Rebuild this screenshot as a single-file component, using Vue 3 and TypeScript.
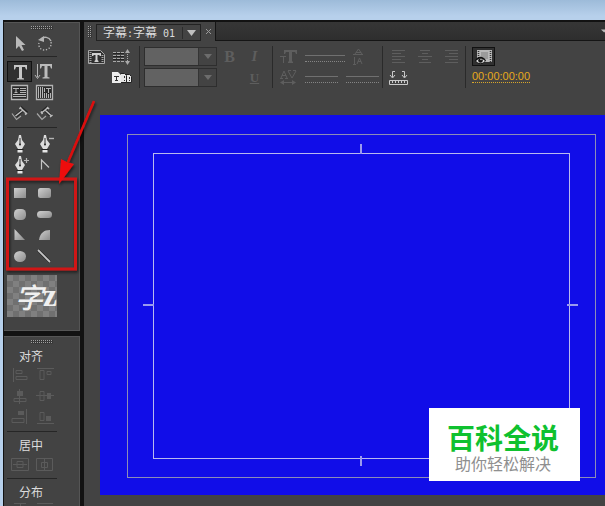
<script setup lang="ts">
import { ref } from 'vue'

interface Tool {
  name: string
  icon: string
}

const L = 'fill="none" stroke="#b4b4b4"'
const pen = '<path d="M11 2h2l1 5 3 4-3 5h-4l-3-5 3-4z" fill="#dcdcdc"/><path d="M12 5v6" stroke="#333"/><circle cx="12" cy="11.500" r="1" fill="#222"/><path d="M9.500 17h5v2.500h-5z" fill="#e6e6e6"/><path d="M8.500 16.500h7" stroke="#222"/>'

const groups: Tool[][] = [
  [
    { name: '选择工具', icon: '<path d="M8 3v13l3-3 3 5 2-1-2.500-5h4z" fill="#b9b9b9"/>' },
    { name: '旋转工具', icon: `<path d="M8 6c3-3 8-2 10 2" ${L} stroke-width="1.400"/><path d="M5 7l6-4v6z" fill="#b4b4b4"/><path d="M18 9c1 5-3 8-7 8-3 0-6-3-5-7" ${L} stroke-width="1.400" stroke-dasharray="1.300 1.700"/>` },
  ],
  [
    { name: '文字工具', icon: '<path d="M6 3h13v4.500h-1L17 5h-3v11l2 .5v1H9v-1l2-.5V5H8L7 7.500H6z" fill="#c6c6c6"/>' },
    { name: '垂直文字工具', icon: '<path d="M4.500 2v13M2 13l2.500 3.500L7 13" fill="none" stroke="#b4b4b4"/><path d="M7 2h12v4.500h-1L17 4h-2.500v11l2 .5v1h-7v-1l2-.5V4H9L8 6.500H7z" fill="#bbb"/>' },
    { name: '区域文字工具', icon: `<path d="M3.500 2.500h16v14h-16z" fill="#292929" stroke="#b4b4b4" stroke-width="1.300"/><path d="M12 5.500h6M12 7.500h6M12 9.500h6M5 11.500h13M5 13.500h13" ${L}/><path d="M5 5.500h6M8 5v5M6.500 9.500h3" ${L}/>` },
    { name: '垂直区域文字工具', icon: `<path d="M3.500 2.500h16v14h-16z" fill="#292929" stroke="#b4b4b4" stroke-width="1.300"/><path d="M5.500 4v11M7.500 4v11M9.500 4v11M11.500 10v5M13.500 10v5M15.500 11v4M17.500 10v5" ${L}/><path d="M13 5.500h5M15.500 5v5M11.500 5v4" ${L}/>` },
    { name: '路径文字工具', icon: '<path d="M8 12l7-6M12 3l7 6" fill="none" stroke="#222" stroke-width="3"/><path d="M7.500 12L15 6M12 3.500l6.500 6M11.500 5l1.500-2M17 10.500l2-1.500" fill="none" stroke="#bcbcbc" stroke-width="1.600"/><path d="M4 9.500l4.500 6 4.500-3.500" fill="none" stroke="#a5a5a5" stroke-width="1.200"/>' },
    { name: '垂直路径文字工具', icon: '<path d="M12 6l6 6M8.500 8.500L15 3" fill="none" stroke="#222" stroke-width="3"/><path d="M12 6l6.500 6M8.500 9L15 3.500M8 7.500L9.500 10M14 3l2 2M17 13l2.500-2" fill="none" stroke="#bcbcbc" stroke-width="1.600"/><path d="M4 9.500l5 6 4-3.500" fill="none" stroke="#a5a5a5" stroke-width="1.200"/>' },
  ],
  [
    { name: '钢笔工具', icon: pen },
    { name: '删除定位点工具', icon: `${pen}<path d="M16 5.500h5" ${L} stroke-width="1.400"/>` },
    { name: '添加定位点工具', icon: `${pen}<path d="M16 6.500h5M18.500 4v5" ${L} stroke-width="1.200"/>` },
    { name: '转换定位点工具', icon: '<path d="M8.500 15.500V6l7.500 7.500" fill="none" stroke="#c4c4c4" stroke-width="1.200"/>' },
  ],
  [
    { name: '矩形工具', icon: '<path d="M6 5h12v10H6z" fill="url(#metal)"/>' },
    { name: '圆角矩形工具', icon: '<rect x="5" y="5" width="13" height="10" rx="2.500" fill="url(#metal)"/>' },
    { name: '切角矩形工具', icon: '<rect x="6" y="5" width="12" height="11" rx="4.500" fill="url(#metal)"/>' },
    { name: '圆矩形工具', icon: '<rect x="4" y="7" width="15" height="7" rx="3.500" fill="url(#metal)"/>' },
    { name: '楔形工具', icon: '<path d="M6.500 4l10.500 11H6.500z" fill="url(#metal)"/>' },
    { name: '弧形工具', icon: '<path d="M6 15C7 8 11 5 17 5v10z" fill="url(#metal)"/>' },
    { name: '椭圆工具', icon: '<ellipse cx="12" cy="10.500" rx="6" ry="5.500" fill="url(#metal)"/>' },
    { name: '直线工具', icon: '<path d="M5 4l12 12" stroke="#222" stroke-width="3"/><path d="M5 4l12 12" stroke="#c4c4c4" stroke-width="1.800"/>' },
  ],
]

const D = 'fill="none" stroke="#5b5b5b"'
const alignTools: Tool[] = [
  { name: '水平靠左', icon: `<path d="M5.500 3v14M8 5.500h6v3H8zM8 11.500h11v3H8z" ${D}/>` },
  { name: '垂直靠上', icon: `<path d="M4 3.500h17M7 5.500h4v9H7zM14 6.500h4v3h-4z" ${D}/>` },
  { name: '水平居中', icon: `<path d="M11.500 3v15M6 12.500h12v3H6z" ${D}/><path d="M9 5h6v5H9z" fill="#5b5b5b"/>` },
  { name: '垂直居中', icon: `<path d="M3 9.500h18M7 5.500h4v9H7z" ${D}/><path d="M14 7h4v6h-4z" fill="#5b5b5b"/>` },
  { name: '水平靠右', icon: `<path d="M18.500 2v15M4 11.500h12v4H4z" ${D}/><path d="M10 4h6v4h-6z" fill="#5b5b5b"/>` },
  { name: '垂直靠下', icon: `<path d="M4 16.500h17M7 5.500h4v8H7z" ${D}/><path d="M13 9h5v5h-5z" fill="#5b5b5b"/>` },
]
const centerTools: Tool[] = [
  { name: '水平居中于画面', icon: `<path d="M3.500 4.500h17v12h-17zM5 10.500h14M9 7.500h6v6H9z" ${D}/>` },
  { name: '垂直居中于画面', icon: `<path d="M3.500 4.500h16v12h-16zM11.500 5v11M8.500 8.500h6v5h-6z" ${D}/>` },
]
const distributeTools: Tool[] = [
  { name: '水平靠左分布', icon: `<path d="M6 2.500h12M12.500 2v10" ${D}/>` },
  { name: '垂直靠上分布', icon: `<path d="M4 2.500h16" ${D}/>` },
]
const sections = [
  { title: '对齐', tools: alignTools },
  { title: '居中', tools: centerTools },
  { title: '分布', tools: distributeTools },
]

const activeTool = ref('文字工具')
</script>

<template>
  <div class="desktop">
    <div class="window">
      <aside class="side">
        <section class="panel tools">
          <div class="grip"></div>
          <div v-for="(group, i) in groups" :key="i" class="tool-grid">
            <button
              v-for="t in group"
              :key="t.name"
              type="button"
              class="tool"
              :class="{ active: t.name === activeTool }"
              :aria-label="t.name"
              @click="activeTool = t.name"
            >
              <svg viewBox="0 0 24 20" v-html="t.icon"></svg>
            </button>
          </div>
          <div class="swatch"><span class="zi">字</span><span class="z">z</span></div>
        </section>
        <section class="panel align">
          <div class="grip"></div>
          <div v-for="s in sections" :key="s.title" class="section">
            <h2>{{ s.title }}</h2>
            <div class="tool-grid">
              <button v-for="t in s.tools" :key="t.name" type="button" class="tool" disabled :aria-label="t.name">
                <svg viewBox="0 0 24 20" v-html="t.icon"></svg>
              </button>
            </div>
          </div>
        </section>
      </aside>

      <main class="titler">
        <header class="tabs">
          <div class="tab-area">
            <div class="grip-v"></div>
            <button type="button" class="tab">
              <span class="tab-name">字幕<span class="half">:</span>字幕<span class="half">&nbsp;01</span></span>
              <span class="tab-drop"><svg width="9" height="6" viewBox="0 0 9 6"><path d="M0 0h9L4.500 6z" fill="#c0c0c0" /></svg></span>
            </button>
            <button type="button" class="close" aria-label="关闭">
              <svg width="7" height="7" viewBox="0 0 7 7"><path d="M1 1l5 5M6 1L1 6" stroke="#9a9a9a" /></svg>
            </button>
          </div>
          <div class="tab-rest">
            <svg width="5" height="4" viewBox="0 0 5 4"><path d="M0 0h8L4 4z" fill="#bbb" /></svg>
          </div>
        </header>

        <div class="toolbar">
          <div class="group templates">
            <button type="button" class="ico" aria-label="新建字幕">
              <svg width="17" height="14" viewBox="0 0 17 14">
                <path d="M.5.500h12l4 4v9H.5z" fill="#303030" stroke="#a9a9a9" />
                <path d="M2.500 2v11M14.500 5v8" stroke="#a9a9a9" stroke-width="2" stroke-dasharray="1 1" />
                <path d="M4 3h9v3h-1l-1-1H9.500v5l1 1v1h-4v-1l1-1V5H6L5 6H4z" fill="#d0d0d0" />
              </svg>
            </button>
            <button type="button" class="ico" aria-label="滚动选项">
              <svg width="17" height="16" viewBox="0 0 17 16">
                <path d="M0 3.500h11M0 6.500h11M0 9.500h11M0 12.500h11" stroke="#a9a9a9" stroke-dasharray="3 1" />
                <path d="M0 4.500h11M0 7.500h11M0 10.500h11" stroke="#222" />
                <path d="M14.500 3v10" stroke="#a9a9a9" stroke-dasharray="1 1" />
                <path d="M12 4l2.500-4L17 4zM12 12l2.500 4 2.500-4z" fill="#a9a9a9" />
              </svg>
            </button>
            <span></span>
            <button type="button" class="ico" aria-label="模板">
              <svg width="20" height="13" viewBox="0 0 20 13">
                <path d="M13.500 3.500h4l2 2v6h-6z" fill="#e6e6e6" stroke="#222" />
                <path d="M8.500 2.500h4l2 2v7h-6z" fill="#e6e6e6" stroke="#222" />
                <path d="M0 1h6l3 3v8H0z" fill="#ededed" />
                <path d="M2 5.500h5M4.500 5v5M3 9.500h3M12.500 5v2M12 9.500h1M17.500 6v2M17 9.500h1" stroke="#333" fill="none" />
              </svg>
            </button>
          </div>

          <div class="group fonts">
            <label class="pick">
              <select disabled aria-label="字体"><option></option></select>
              <span><svg width="8" height="5" viewBox="0 0 8 5"><path d="M0 0h8L4 5z" fill="#6c6c6c" /></svg></span>
            </label>
            <label class="pick">
              <select disabled aria-label="字体样式"><option></option></select>
              <span><svg width="8" height="5" viewBox="0 0 8 5"><path d="M0 0h8L4 5z" fill="#6c6c6c" /></svg></span>
            </label>
          </div>

          <div class="group style">
            <button type="button" class="glyph bold" disabled>B</button>
            <button type="button" class="glyph italic" disabled>I</button>
            <span></span>
            <button type="button" class="glyph under" disabled>U</button>
          </div>

          <div class="group metrics">
            <div class="line">
              <svg width="17" height="15" viewBox="0 0 17 15">
                <path d="M4 1h13v4h-1l-1-2h-3v9l1 1v1H8v-1l1-1V3H6L5 5H4z" fill="#5e5e5e" />
                <path d="M0 7.500h6M3.500 8v6" stroke="#5e5e5e" />
              </svg>
              <i class="dash wide"></i>
              <svg width="10" height="17" viewBox="0 0 10 17">
                <path d="M2 6l3.500-5L9 6M3 4.500h5M0 6.500h10M1.500 9v7M4 16l2.500-6L9 16M5 13.500h3M0 16.500h3" fill="none" stroke="#5e5e5e" />
              </svg>
            </div>
            <div class="line">
              <svg width="17" height="15" viewBox="0 0 17 15">
                <path d="M1 8l3-7 3 7M2 5.500h4M8 1l4 7 4-7M0 8.500h3M5 8.500h3M8 .5h3M13 .5h3M3 12.500h11" fill="none" stroke="#5e5e5e" />
                <path d="M0 12.500L4 10v5zM16 12.500L12 10v5z" fill="#5e5e5e" />
              </svg>
              <i class="dash"></i>
              <i class="dash"></i>
            </div>
          </div>

          <div class="group paragraph">
            <button type="button" class="ico" disabled aria-label="左对齐">
              <svg width="14" height="13" viewBox="0 0 14 13"><path d="M0 .5h13M0 3.500h9M0 6.500h13M0 9.500h9M0 12.500h13" stroke="#5e5e5e" /></svg>
            </button>
            <button type="button" class="ico" disabled aria-label="居中对齐">
              <svg width="14" height="13" viewBox="0 0 14 13"><path d="M2 .5h10M4 3.500h6M0 6.500h14M4 9.500h6M1 12.500h12" stroke="#5e5e5e" /></svg>
            </button>
            <button type="button" class="ico" disabled aria-label="右对齐">
              <svg width="14" height="13" viewBox="0 0 14 13"><path d="M1 .5h13M5 3.500h9M1 6.500h13M5 9.500h9M1 12.500h13" stroke="#5e5e5e" /></svg>
            </button>
            <button type="button" class="ico" aria-label="制表符设置">
              <svg width="20" height="14" viewBox="0 0 20 14">
                <path d="M6 .5H3.500V6M1 4l2.500 3L6 4M13 .5h2.500V6M13 4l2.500 3L18 4" fill="none" stroke="#c9c9c9" />
                <path d="M.5 9.500h18v4H.5z" fill="#444" stroke="#c9c9c9" />
                <path d="M3.500 10v2M6.500 10v2M9.500 10v2M12.500 10v2M15.500 10v2" stroke="#c9c9c9" />
              </svg>
            </button>
          </div>

          <div class="group video">
            <button type="button" class="film" aria-label="显示背景视频">
              <svg width="18" height="14" viewBox="0 0 18 14">
                <path d="M2 0h15v12H2z" fill="#b9b9b9" />
                <path d="M3.500 1v11M15.500 1v11" stroke="#333" stroke-width="1.500" stroke-dasharray="1 1" />
                <path d="M6 2h7v7H6z" fill="#9b9b9b" />
                <path d="M0 10.500c3-5 8-5 11 0-3 4.500-8 4.500-11 0z" fill="#111" />
                <path d="M1 11c3-3.500 6-3.500 9 0-3 3-6 3-9 0z" fill="#ddd" />
                <circle cx="5.500" cy="10.500" r="2.300" fill="#111" />
                <circle cx="6" cy="9.500" r=".7" fill="#eee" />
              </svg>
            </button>
            <a href="#" class="time">00:00:00:00</a>
          </div>
        </div>

        <div class="stage">
          <div class="action-safe">
            <div class="title-safe">
              <i class="tick top"></i><i class="tick bottom"></i><i class="tick left"></i><i class="tick right"></i>
            </div>
          </div>
        </div>
      </main>
    </div>

    <svg class="note" width="120" height="280" viewBox="0 0 120 280">
      <defs>
        <linearGradient id="metal" x1="0" y1="0" x2="1" y2="1">
          <stop offset="0" stop-color="#d0d0d0" />
          <stop offset="1" stop-color="#8c8c8c" />
        </linearGradient>
        <filter id="shade" x="-20%" y="-20%" width="140%" height="140%">
          <feDropShadow dx="1" dy="2" stdDeviation="1.500" flood-color="#000" flood-opacity=".6" />
        </filter>
      </defs>
      <g filter="url(#shade)">
        <path d="M7.500 179h68v90h-68z" fill="none" stroke="#d01414" stroke-width="3" />
        <path d="M94 101L68 162" stroke="#dd1010" stroke-width="2.500" />
        <path d="M59 184l2-25 6 3 7 2z" fill="#ee1111" />
      </g>
    </svg>

    <div class="brand">
      <strong>百科全说</strong>
      <span>助你轻松解决</span>
    </div>
  </div>
</template>

<style>
body {
  background: #b5cfea;
}
</style>

<style scoped>
.desktop {
  position: relative;
  box-sizing: border-box;
  height: 100vh;
  padding: 20px 0 0 3px;
  overflow: hidden;
  background: linear-gradient(#9dbbd9, #b7d0eb 16px, #b7d0eb);
  font-family: "Liberation Sans", "Noto Sans CJK SC", sans-serif;
  font-size: 12px;
  color: #dcdcdc;
}
.window {
  display: flex;
  gap: 4px;
  height: 100%;
  box-sizing: border-box;
  padding: 2px 0 0 1px;
  background: #121212;
}
button {
  padding: 0;
  border: 0;
  background: none;
  color: inherit;
  font: inherit;
}
svg {
  display: block;
}
.side {
  display: flex;
  flex-direction: column;
  gap: 5px;
  flex: none;
  width: 76px;
}
.panel {
  box-sizing: border-box;
  background: #434343;
  border: solid #555;
  border-width: 1px 1px 0 0;
  padding: 3px 0 0 3px;
  overflow: hidden;
}
.tools {
  flex: none;
  padding-bottom: 13px;
  border-bottom-width: 1px;
}
.align {
  flex: 1;
}
.grip,
.grip-v {
  background:
    repeating-linear-gradient(transparent 0 1px, #3a3a3a 1px 2px),
    repeating-linear-gradient(90deg, #a0a0a0 0 1px, #333 1px 2px);
}
.grip {
  width: 22px;
  height: 4px;
  margin: 0 0 2px 24px;
}
.tool-grid {
  display: grid;
  grid-template-columns: repeat(2, 25px);
  grid-auto-rows: 21px;
}
.tools .tool-grid:nth-child(3),
.tools .tool-grid:nth-child(4) {
  margin-top: 3px;
  padding-top: 4px;
  border-top: 1px solid #262626;
  width: 50px;
}
.tools .tool-grid:nth-child(5) {
  margin-top: 8px;
}
.tool {
  display: grid;
  place-items: center;
  box-sizing: border-box;
  width: 25px;
  height: 21px;
}
.tool svg {
  width: 24px;
  height: 20px;
}
.tool.active {
  background: #303030;
  box-shadow: inset 0 0 0 1px #111;
}
.swatch {
  display: flex;
  align-items: center;
  width: 50px;
  height: 42px;
  margin-top: 9px;
  overflow: hidden;
  background: repeating-conic-gradient(#707070 0 25%, #808080 0 50%) 0 0 / 12px 12px;
  color: #f0f0f0;
}
.zi {
  padding-left: 8px;
  font: italic 500 28px/42px "Noto Sans CJK SC", sans-serif;
}
.z {
  font: 700 31px/42px "Liberation Serif", serif;
}
.section + .section {
  margin-top: 4px;
  padding-top: 5px;
  border-top: 1px solid #262626;
  width: 50px;
}
.section h2 {
  margin: 0 0 0 12px;
  font: 400 12px/16px "Noto Sans CJK SC", sans-serif;
}
.align .grip {
  margin-bottom: 4px;
}
.titler {
  display: flex;
  flex: 1;
  flex-direction: column;
  min-width: 0;
  background: #434343;
}
.tabs {
  display: flex;
  flex: none;
  height: 19px;
}
.tab-area {
  display: flex;
  align-items: center;
  gap: 4px;
  width: 131px;
  padding-left: 4px;
  box-sizing: border-box;
}
.grip-v {
  width: 4px;
  height: 12px;
}
.tab {
  display: flex;
  align-items: center;
  box-sizing: border-box;
  width: 105px;
  height: 17px;
  padding-left: 6px;
  border: 1px solid #222;
  align-self: flex-end;
}
.tab-name {
  flex: 1;
  text-align: left;
  white-space: nowrap;
  font: 400 12px/15px "Noto Sans CJK SC", sans-serif;
}
.half {
  font-family: "DejaVu Sans Mono", monospace;
  font-size: 10px;
}
.tab-drop {
  display: grid;
  place-items: center;
  width: 17px;
  height: 12px;
  border-left: 1px solid #2c2c2c;
}
.tab-rest {
  display: flex;
  flex: 1;
  align-items: center;
  justify-content: flex-end;
  background: linear-gradient(#363636, #2e2e2e);
  border-left: 1px solid #151515;
  border-bottom: 1px solid #151515;
}
.tab-rest svg {
  width: 4px;
}
.toolbar {
  display: flex;
  flex: none;
  height: 42px;
  padding: 5px 0 27px;
}
.group {
  box-sizing: border-box;
  border-right: 1px solid #2a2a2a;
}
.group:last-child {
  border: 0;
}
.templates {
  display: grid;
  grid-template-columns: 25px 25px;
  grid-template-rows: 21px 21px;
  width: 56px;
}
.ico {
  display: grid;
  place-items: center;
}
.fonts {
  display: flex;
  flex-direction: column;
  gap: 2px;
  padding: 1px 0 0 4px;
  border: 0;
}
.pick {
  display: flex;
  box-sizing: border-box;
  width: 73px;
  height: 19px;
  border: 1px solid #2e2e2e;
}
.pick select {
  appearance: none;
  flex: 1;
  min-width: 0;
  padding: 0;
  border: 0;
  background: #626262;
  opacity: 1;
}
.pick span {
  display: grid;
  place-items: center;
  width: 17px;
  border-left: 1px solid #343434;
}
.style {
  display: grid;
  grid-template-columns: 25px 25px;
  grid-template-rows: 21px 21px;
  width: 56px;
}
.glyph {
  color: #5e5e5e;
  font: 700 15px/21px "Liberation Serif", serif;
}
.bold {
  font-size: 16px;
}
.italic {
  font-style: italic;
}
.under {
  font-size: 13px;
  text-decoration: underline;
}
.metrics {
  width: 110px;
  padding-left: 7px;
}
.line {
  display: flex;
  align-items: center;
  gap: 8px;
  height: 21px;
}
.dash {
  width: 33px;
  height: 7px;
  box-sizing: border-box;
  margin-top: 4px;
  border-top: 1px solid #707070;
  border-bottom: 1px dotted #858585;
}
.wide {
  width: 40px;
}
.paragraph {
  display: grid;
  grid-template-columns: 26px 26px 26px;
  grid-template-rows: 21px 21px;
  width: 83px;
  padding-left: 3px;
}
.video {
  padding: 1px 0 0 6px;
}
.film {
  display: grid;
  place-items: center;
  width: 23px;
  height: 19px;
  border: 1px solid #111;
  background: #303030;
}
.time {
  display: block;
  height: 12px;
  margin-top: 4px;
  border-bottom: 1px dotted #d9a62a;
  color: #e6aa1c;
  font-size: 11px;
  line-height: 13px;
  text-decoration: none;
}
.stage {
  display: flex;
  flex: 1;
  min-height: 0;
  box-sizing: border-box;
  margin: 0 0 11px 16px;
  padding: 19px 9px 17px 27px;
  background: #110de8;
}
.action-safe {
  display: flex;
  flex: 1;
  box-sizing: border-box;
  padding: 18px 25px;
  border: 1px solid #8c8cb8;
}
.title-safe {
  position: relative;
  flex: 1;
  border: 1px solid #b9b9ee;
}
.tick {
  position: absolute;
  background: #9a9aee;
}
.top,
.bottom {
  left: 50%;
  width: 2px;
  height: 10px;
  margin-left: -2px;
}
.top {
  bottom: 100%;
}
.bottom {
  bottom: -8px;
}
.left,
.right {
  top: 50%;
  width: 11px;
  height: 2px;
  margin-top: -2px;
}
.left {
  right: 100%;
}
.right {
  right: -9px;
}
.note {
  position: absolute;
  top: 0;
  left: 0;
  pointer-events: none;
}
.brand {
  position: absolute;
  right: 25px;
  bottom: 25px;
  display: flex;
  flex-direction: column;
  align-items: center;
  gap: 4px;
  box-sizing: border-box;
  padding: 15px 21px 9px 18px;
  background: #fff;
  color: #8f8f8f;
  font-family: "Noto Sans CJK SC", sans-serif;
}
.brand strong {
  color: #0fc12f;
  font-size: 28px;
  font-weight: 700;
  line-height: 28px;
}
.brand span {
  font-size: 16px;
  font-weight: 400;
  line-height: 17px;
}
</style>
